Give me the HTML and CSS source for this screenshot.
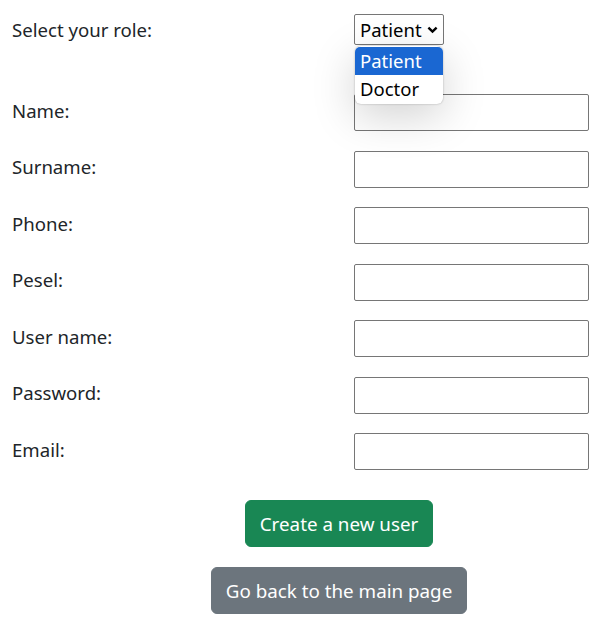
FILE: index.html
```html
<!DOCTYPE html>
<html>
<head>
<meta charset="utf-8">
<link rel="stylesheet" href="styles.css">
</head>
<body>
<form class="form">
  <div class="row row-role">
    <label class="label">Select your role:</label>
    <div class="select-wrap">
      <div class="select">
        <span>Patient</span>
        <svg class="chev" width="11" height="8" viewBox="0 0 11 8"><path d="M1.4 1.6 L5.5 5.6 L9.6 1.6" fill="none" stroke="#000" stroke-width="2.4"/></svg>
      </div>
      <ul class="menu">
        <li class="opt active">Patient</li>
        <li class="opt">Doctor</li>
      </ul>
    </div>
  </div>
  <div class="row"><label class="label">Name:</label><input class="input" type="text"></div>
  <div class="row"><label class="label">Surname:</label><input class="input" type="text"></div>
  <div class="row"><label class="label">Phone:</label><input class="input" type="text"></div>
  <div class="row"><label class="label">Pesel:</label><input class="input" type="text"></div>
  <div class="row"><label class="label">User name:</label><input class="input" type="text"></div>
  <div class="row"><label class="label">Password:</label><input class="input" type="password"></div>
  <div class="row"><label class="label">Email:</label><input class="input" type="text"></div>
  <div class="actions">
    <button type="button" class="btn btn-success">Create a new user</button>
    <button type="button" class="btn btn-secondary">Go back to the main page</button>
  </div>
</form>
</body>
</html>
```
FILE: styles.css
```css
html, body {
  margin: 0;
  padding: 0;
  background: #fff;
}
body {
  font-family: "Noto Sans", "Open Sans", sans-serif;
  font-size: 18.6px;
  color: #212529;
}
.form {
  padding: 14px 0 0 12px;
  width: 577px;
  display: flex;
  flex-direction: column;
}
.row {
  display: grid;
  grid-template-columns: 342px 235px;
  align-items: center;
  height: 37px;
  margin-bottom: 19.5px;
}
.row-role {
  height: 31px;
  margin-bottom: 49px;
}
.label {
  line-height: 24px;
  padding-bottom: 4px;
}
.row-role .label {
  padding-bottom: 0;
}
.input {
  box-sizing: border-box;
  width: 235px;
  height: 37px;
  margin: 0;
  border: 1px solid #767676;
  border-radius: 2px;
  background: #fff;
  font: inherit;
}
.select-wrap {
  position: relative;
  width: 90px;
  height: 31px;
}
.select {
  box-sizing: border-box;
  width: 90px;
  height: 31px;
  border: 1px solid #767676;
  border-radius: 2px;
  display: flex;
  align-items: center;
  padding: 0 5px 0 5px;
  justify-content: space-between;
  color: #000;
  font-size: 18.5px;
}
.chev {
  display: block;
}
.menu {
  position: absolute;
  left: 1px;
  top: 32px;
  width: 88px;
  margin: 0;
  padding: 1px 0;
  list-style: none;
  background: #fff;
  border-radius: 6px;
  box-shadow: 0 12px 44px rgba(0,0,0,0.18), 0 0 2px rgba(0,0,0,0.3);
  z-index: 5;
  color: #000;
  font-size: 18.5px;
}
.opt {
  height: 28px;
  line-height: 28px;
  padding: 0 5px;
}
.opt.active {
  background: #1a67d2;
  color: #fff;
  border-radius: 5px 5px 0 0;
}
.actions {
  display: flex;
  flex-direction: column;
  align-items: center;
  gap: 20px;
  padding-left: 77px;
  padding-top: 10.5px;
}
.btn {
  box-sizing: border-box;
  height: 47px;
  padding: 0 14px;
  border: 1px solid transparent;
  border-radius: 6px;
  color: #fff;
  font: inherit;
  font-size: 18.8px;
  line-height: 24px;
}
.btn-success {
  background: #198754;
  border-color: #198754;
}
.btn-secondary {
  background: #6c757d;
  border-color: #6c757d;
}
```
